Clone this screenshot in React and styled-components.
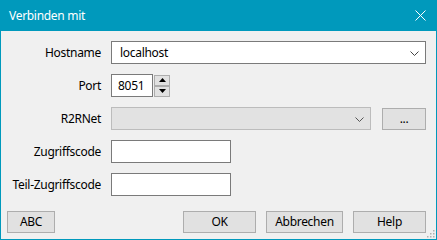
import React from "react";
import styled, { createGlobalStyle } from "styled-components";

const Global = createGlobalStyle`
  html, body { margin: 0; padding: 0; background: #f0f0f0; }
  * { box-sizing: border-box; }
`;

const Window = styled.div`
  width: 437px;
  height: 240px;
  border: 1px solid #0099bc;
  border-top: none;
  background: #f0f0f0;
  display: flex;
  flex-direction: column;
  font-family: "Noto Sans", "Open Sans", sans-serif;
  font-size: 12px;
  letter-spacing: -0.3px;
  color: #000;
  position: relative;
`;

const TitleBar = styled.div`
  height: 31px;
  margin: 0 -1px;
  background: #0099bc;
  color: #fff;
  display: flex;
  align-items: center;
  justify-content: space-between;
  padding: 0 10px 1px 9px;
  font-size: 12px;
`;

const Close = styled.svg`
  width: 11px;
  height: 11px;
  margin-right: 1px;
`;

const Form = styled.div`
  display: grid;
  grid-template-columns: 100px 1fr;
  column-gap: 10px;
  row-gap: 10px;
  grid-auto-rows: 23px;
  padding: 10px 10px 0 0;
`;

const Label = styled.label`
  display: flex;
  align-items: center;
  justify-content: flex-end;
  white-space: nowrap;
  padding-bottom: 1px;
`;

const FieldRow = styled.div`
  display: flex;
  align-items: center;
  gap: ${(p) => p.$gap || 0}px;
`;

const Combo = styled.div`
  height: 23px;
  flex: ${(p) => (p.$width ? "none" : "1")};
  width: ${(p) => (p.$width ? `${p.$width}px` : "auto")};
  border: 1px solid ${(p) => (p.$disabled ? "#bcbcbc" : "#7a7a7a")};
  background: ${(p) => (p.$disabled ? "#e2e2e2" : "#fff")};
  display: flex;
  align-items: center;
  justify-content: space-between;
  padding: 0 6px 1px 8px;
`;

const Chevron = styled.svg`
  width: 9px;
  height: 5px;
  margin-top: 2px;
`;

const Input = styled.div`
  height: ${(p) => p.$h || 23}px;
  width: ${(p) => p.$width}px;
  border: 1px solid #7a7a7a;
  background: #fff;
  display: flex;
  align-items: center;
  padding: 0 0 1px 6px;
`;

const Spinner = styled.div`
  display: flex;
  flex-direction: column;
  margin-left: 1px;
  height: 23px;
  justify-content: center;
`;

const SpinBtn = styled.div`
  width: 16px;
  height: 11px;
  border: 1px solid #adadad;
  background: #e1e1e1;
  display: flex;
  align-items: center;
  justify-content: center;
`;

const Footer = styled.div`
  margin-top: auto;
  display: flex;
  align-items: center;
  padding: 0 9px 6px 6px;
`;

const Button = styled.div`
  height: 22px;
  width: ${(p) => p.$width}px;
  margin-left: ${(p) => p.$ml || 0}px;
  border: 1px solid #adadad;
  background: #e1e1e1;
  color: #000;
  display: flex;
  align-items: center;
  justify-content: center;
  padding-bottom: 1px;
`;

const Grip = styled.svg`
  position: absolute;
  right: 1px;
  bottom: 1px;
  width: 10px;
  height: 10px;
`;

const ChevronIcon = ({ color = "#444" }) => (
  <Chevron viewBox="0 0 9 5">
    <polyline points="0.5,0.5 4.5,4.5 8.5,0.5" fill="none" stroke={color} strokeWidth="1" />
  </Chevron>
);

export default function App() {
  return (
    <>
      <Global />
      <Window>
        <TitleBar>
          <span>Verbinden mit</span>
          <Close viewBox="0 0 11 11">
            <path d="M0.5 0.5 L10.5 10.5 M10.5 0.5 L0.5 10.5" stroke="#fff" strokeWidth="1" />
          </Close>
        </TitleBar>
        <Form>
          <Label>Hostname</Label>
          <FieldRow>
            <Combo>
              <span>localhost</span>
              <ChevronIcon />
            </Combo>
          </FieldRow>

          <Label>Port</Label>
          <FieldRow>
            <Input $width={42} $h={23}>8051</Input>
            <Spinner>
              <SpinBtn>
                <svg width="7" height="4" viewBox="0 0 7 4"><polygon points="3.5,0 7,4 0,4" fill="#000" /></svg>
              </SpinBtn>
              <SpinBtn>
                <svg width="7" height="4" viewBox="0 0 7 4"><polygon points="0,0 7,0 3.5,4" fill="#000" /></svg>
              </SpinBtn>
            </Spinner>
          </FieldRow>

          <Label>R2RNet</Label>
          <FieldRow $gap={11}>
            <Combo $disabled $width={260}>
              <span />
              <ChevronIcon color="#555" />
            </Combo>
            <Button $width={44}>...</Button>
          </FieldRow>

          <Label>Zugriffscode</Label>
          <FieldRow>
            <Input $width={120} />
          </FieldRow>

          <Label>Teil-Zugriffscode</Label>
          <FieldRow>
            <Input $width={120} />
          </FieldRow>
        </Form>
        <Footer>
          <Button $width={48}>ABC</Button>
          <Button $width={73} $ml={128}>OK</Button>
          <Button $width={77} $ml={10}>Abbrechen</Button>
          <Button $width={73} $ml={10}>Help</Button>
        </Footer>
        <Grip viewBox="0 0 10 10">
          {[[8, 2], [8, 5], [8, 8], [5, 5], [5, 8], [2, 8]].map(([x, y], i) => (
            <rect key={i} x={x} y={y} width="1.5" height="1.5" fill="#b0b0b0" />
          ))}
        </Grip>
      </Window>
    </>
  );
}
